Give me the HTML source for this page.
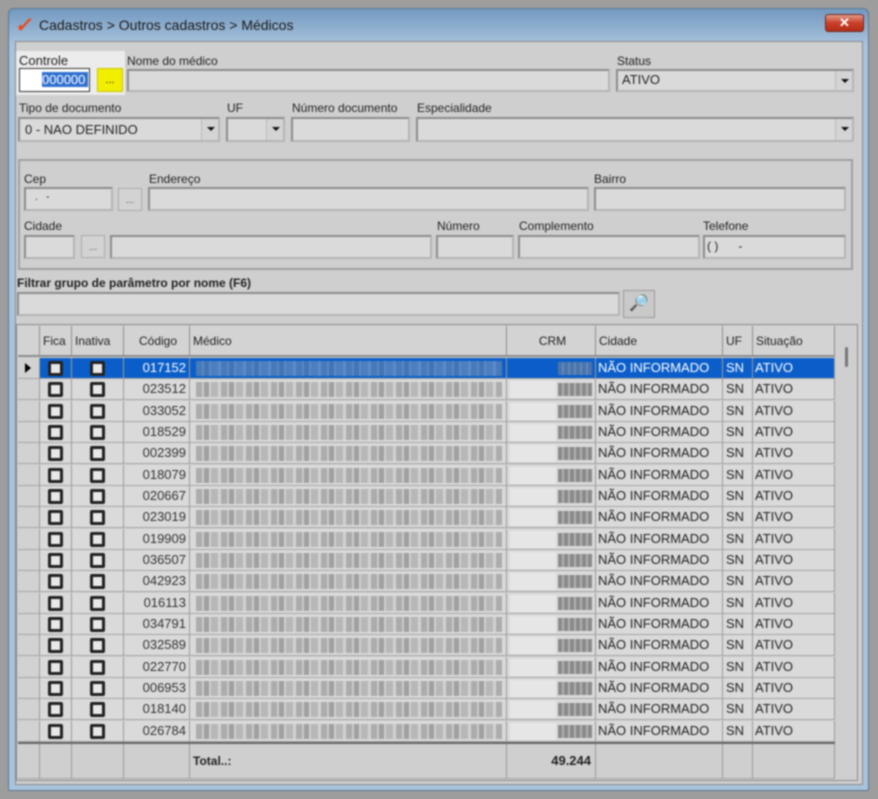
<!DOCTYPE html>
<html><head><meta charset="utf-8">
<style>
*{box-sizing:border-box;margin:0;padding:0}
body{width:878px;height:799px;background:#9d9d9d;font-family:"Liberation Sans",Tahoma,sans-serif;font-size:12px;color:#222;position:relative;overflow:hidden}
#w{position:absolute;left:0;top:0;width:878px;height:799px;filter:blur(0.7px)}
.abs{position:absolute}
.win{left:8px;top:8px;width:861px;height:783px;background:linear-gradient(#7399c0,#a9c3dc 36px,#a9c3dc);border:1px solid #5d7690;border-radius:6px 6px 2px 2px}
.client{left:15px;top:41px;width:848px;height:744px;background:#cfcfcf;border:1px solid #8a8a8a}
.lbl{position:absolute;font-size:12px;color:#222;white-space:nowrap}
.inp{position:absolute;height:22px;background:#dadada;border:2px solid #8c8c8c;border-right-color:#b5b5b5;border-bottom-color:#b5b5b5}
.dd{position:absolute;right:0;top:0;width:17px;height:18px;background:#d4d4d4;border-left:1px solid #bbb}
.dd:after{content:"";position:absolute;left:5px;top:8px;border-left:4px solid transparent;border-right:4px solid transparent;border-top:4px solid #111}
.btn{position:absolute;background:#d3d3d3;border:1px solid #a8a8a8;font-size:10px;text-align:center;line-height:16px;color:#555}
.row{position:absolute;left:18px;height:21px;display:flex;width:817px}
.row>div{height:100%;border-right:1px solid #9a9a9a;border-bottom:1px solid #a5a5a5;background:#dadada;font-size:13px;line-height:20px;white-space:nowrap;overflow:hidden;position:relative}
.c0{width:22px;background:#d2d2d2!important}.c1{width:32px}.c2{width:52px}.c3{width:66px;text-align:right;padding-right:3px;color:#333}.c4{width:317px}.c5{width:89px}.c6{width:127px;padding-left:2px}.c7{width:30px;padding-left:3px}.c8{width:82px;padding-left:2px}
.cb{position:absolute;top:3px;width:15px;height:15px;border:3px solid #222;border-radius:2px;background:#e8e8e8}
.c1 .cb{left:8px}.c2 .cb{left:18px}
.nm{position:absolute;left:6px;top:3px;right:4px;height:15px;background:repeating-linear-gradient(90deg,#a4a4a4 0 6px,#c8c8c8 6px 8px,#969696 8px 13px,#cdcdcd 13px 15px,#b0b0b0 15px 22px,#d0d0d0 22px 25px);opacity:.85}
.crmb{position:absolute;left:3px;top:2px;width:46px;height:17px;background:#e6e6e6}
.crm{position:absolute;right:3px;top:4px;width:34px;height:13px;background:repeating-linear-gradient(90deg,#8a8a8a 0 4px,#b0b0b0 4px 6px)}
.hdr{position:absolute;left:18px;top:326px;height:31px;display:flex;width:817px}
.hdr>div{height:100%;border-right:1px solid #8d8d8d;border-bottom:2px solid #8d8d8d;background:#d3d3d3;line-height:30px;font-size:12px;padding-left:3px;white-space:nowrap}
.sel>div{background:#0b5ec9;color:#fff!important}
.sel .cb{background:#e8e8e8}
</style></head><body><div id="w">
<div class="abs win"></div>
<div class="abs" style="left:16px;top:13px;font-size:21px;color:#e84a1c;font-weight:bold;transform:skewX(-10deg)">✓</div>
<div class="abs" style="left:39px;top:17px;font-size:14px;color:#1a1a1a">Cadastros &gt; Outros cadastros &gt; Médicos</div>
<div class="abs" style="left:825px;top:14px;width:39px;height:18px;background:linear-gradient(#e29a8a,#c9402a 50%,#b32c18);border:1px solid #6d2a20;border-radius:3px;color:#fff;text-align:center;font-size:13px;font-weight:bold;line-height:16px">✕</div>
<div class="abs client"></div>

<div class="abs" style="left:16px;top:51px;width:109px;height:44px;background:#ececec"></div>
<div class="lbl" style="left:19px;top:53px;font-size:13px">Controle</div>
<div class="abs" style="left:19px;top:68px;width:71px;height:24px;background:#fff;border:1px solid #333"></div>
<div class="abs" style="left:42px;top:72px;width:46px;height:15px;background:#3070d0;color:#fff;font-size:13px;line-height:15px;overflow:hidden">000000</div>
<div class="abs" style="left:97px;top:68px;width:26px;height:24px;background:#f2ee00;border:1px solid #c8c400;text-align:center;font-size:11px;line-height:22px">...</div>
<div class="lbl" style="left:127px;top:54px">Nome do médico</div>
<div class="inp" style="left:127px;top:69px;width:483px;height:23px"></div>
<div class="lbl" style="left:617px;top:54px">Status</div>
<div class="inp" style="left:616px;top:69px;width:238px;height:23px;padding-left:4px;line-height:18px;font-size:13px">ATIVO<div class="dd"></div></div>

<div class="lbl" style="left:19px;top:101px">Tipo de documento</div>
<div class="inp" style="left:18px;top:117px;width:202px;height:25px;padding-left:5px;line-height:21px;font-size:13px">0 - NAO DEFINIDO<div class="dd" style="height:21px"></div></div>
<div class="lbl" style="left:227px;top:101px">UF</div>
<div class="inp" style="left:226px;top:117px;width:59px;height:25px"><div class="dd" style="height:21px"></div></div>
<div class="lbl" style="left:292px;top:101px">Número documento</div>
<div class="inp" style="left:291px;top:117px;width:119px;height:25px"></div>
<div class="lbl" style="left:417px;top:101px">Especialidade</div>
<div class="inp" style="left:416px;top:117px;width:438px;height:25px"><div class="dd" style="height:21px"></div></div>

<div class="abs" style="left:18px;top:159px;width:835px;height:111px;border:2px solid #a0a0a0"></div>
<div class="lbl" style="left:24px;top:172px">Cep</div>
<div class="inp" style="left:24px;top:187px;width:89px;height:24px;padding-left:9px;font-size:10px;line-height:18px">.&nbsp;&nbsp; -</div>
<div class="btn" style="left:118px;top:188px;width:24px;height:23px;line-height:24px">...</div>
<div class="lbl" style="left:149px;top:172px">Endereço</div>
<div class="inp" style="left:148px;top:187px;width:441px;height:24px"></div>
<div class="lbl" style="left:594px;top:172px">Bairro</div>
<div class="inp" style="left:594px;top:187px;width:252px;height:24px"></div>
<div class="lbl" style="left:24px;top:219px">Cidade</div>
<div class="inp" style="left:24px;top:235px;width:51px;height:24px"></div>
<div class="btn" style="left:81px;top:235px;width:24px;height:23px;line-height:24px">...</div>
<div class="inp" style="left:110px;top:235px;width:322px;height:24px"></div>
<div class="lbl" style="left:437px;top:219px">Número</div>
<div class="inp" style="left:436px;top:235px;width:78px;height:24px"></div>
<div class="lbl" style="left:519px;top:219px">Complemento</div>
<div class="inp" style="left:518px;top:235px;width:182px;height:24px"></div>
<div class="lbl" style="left:703px;top:219px">Telefone</div>
<div class="inp" style="left:703px;top:235px;width:143px;height:24px;padding-left:2px;line-height:18px;font-size:12px">( )&nbsp;&nbsp;&nbsp;&nbsp;&nbsp; -</div>

<div class="lbl" style="left:17px;top:276px;font-weight:bold">Filtrar grupo de parâmetro por nome (F6)</div>
<div class="inp" style="left:17px;top:292px;width:603px;height:24px"></div>
<div class="abs" style="left:623px;top:290px;width:32px;height:28px;background:#c9c9c9;border:1px solid #999;text-align:center;line-height:26px;font-size:16px;color:#3a8dd0">🔎</div>

<div class="abs" style="left:16px;top:324px;width:842px;height:457px;background:#cfcfcf;border:1px solid #8a8a8a"></div>
<div class="hdr">
<div style="width:22px"></div><div style="width:32px">Fica</div><div style="width:52px">Inativa</div><div style="width:66px;text-align:center">Código</div><div style="width:317px">Médico</div><div style="width:89px;text-align:center">CRM</div><div style="width:127px">Cidade</div><div style="width:30px">UF</div><div style="width:82px">Situação</div>
</div>
<div class="abs" style="left:845px;top:347px;width:3px;height:20px;background:#777;border-radius:2px"></div>

<div class="row sel" style="top:358px"><div class="c0"><span class="abs" style="left:7px;top:5px;border-top:5px solid transparent;border-bottom:5px solid transparent;border-left:6px solid #000"></span></div><div class="c1"><span class="cb"></span></div><div class="c2"><span class="cb"></span></div><div class="c3">017152</div><div class="c4"><span class="nm" style="opacity:.4"></span></div><div class="c5"><span class="crm" style="opacity:.5"></span></div><div class="c6">NÃO INFORMADO</div><div class="c7">SN</div><div class="c8">ATIVO</div></div>
<div class="row" style="top:379px"><div class="c0"></div><div class="c1"><span class="cb"></span></div><div class="c2"><span class="cb"></span></div><div class="c3">023512</div><div class="c4"><span class="nm"></span></div><div class="c5"><span class="crmb"></span><span class="crm"></span></div><div class="c6">NÃO INFORMADO</div><div class="c7">SN</div><div class="c8">ATIVO</div></div>
<div class="row" style="top:401px"><div class="c0"></div><div class="c1"><span class="cb"></span></div><div class="c2"><span class="cb"></span></div><div class="c3">033052</div><div class="c4"><span class="nm"></span></div><div class="c5"><span class="crmb"></span><span class="crm"></span></div><div class="c6">NÃO INFORMADO</div><div class="c7">SN</div><div class="c8">ATIVO</div></div>
<div class="row" style="top:422px"><div class="c0"></div><div class="c1"><span class="cb"></span></div><div class="c2"><span class="cb"></span></div><div class="c3">018529</div><div class="c4"><span class="nm"></span></div><div class="c5"><span class="crmb"></span><span class="crm"></span></div><div class="c6">NÃO INFORMADO</div><div class="c7">SN</div><div class="c8">ATIVO</div></div>
<div class="row" style="top:443px"><div class="c0"></div><div class="c1"><span class="cb"></span></div><div class="c2"><span class="cb"></span></div><div class="c3">002399</div><div class="c4"><span class="nm"></span></div><div class="c5"><span class="crmb"></span><span class="crm"></span></div><div class="c6">NÃO INFORMADO</div><div class="c7">SN</div><div class="c8">ATIVO</div></div>
<div class="row" style="top:465px"><div class="c0"></div><div class="c1"><span class="cb"></span></div><div class="c2"><span class="cb"></span></div><div class="c3">018079</div><div class="c4"><span class="nm"></span></div><div class="c5"><span class="crmb"></span><span class="crm"></span></div><div class="c6">NÃO INFORMADO</div><div class="c7">SN</div><div class="c8">ATIVO</div></div>
<div class="row" style="top:486px"><div class="c0"></div><div class="c1"><span class="cb"></span></div><div class="c2"><span class="cb"></span></div><div class="c3">020667</div><div class="c4"><span class="nm"></span></div><div class="c5"><span class="crmb"></span><span class="crm"></span></div><div class="c6">NÃO INFORMADO</div><div class="c7">SN</div><div class="c8">ATIVO</div></div>
<div class="row" style="top:507px"><div class="c0"></div><div class="c1"><span class="cb"></span></div><div class="c2"><span class="cb"></span></div><div class="c3">023019</div><div class="c4"><span class="nm"></span></div><div class="c5"><span class="crmb"></span><span class="crm"></span></div><div class="c6">NÃO INFORMADO</div><div class="c7">SN</div><div class="c8">ATIVO</div></div>
<div class="row" style="top:529px"><div class="c0"></div><div class="c1"><span class="cb"></span></div><div class="c2"><span class="cb"></span></div><div class="c3">019909</div><div class="c4"><span class="nm"></span></div><div class="c5"><span class="crmb"></span><span class="crm"></span></div><div class="c6">NÃO INFORMADO</div><div class="c7">SN</div><div class="c8">ATIVO</div></div>
<div class="row" style="top:550px"><div class="c0"></div><div class="c1"><span class="cb"></span></div><div class="c2"><span class="cb"></span></div><div class="c3">036507</div><div class="c4"><span class="nm"></span></div><div class="c5"><span class="crmb"></span><span class="crm"></span></div><div class="c6">NÃO INFORMADO</div><div class="c7">SN</div><div class="c8">ATIVO</div></div>
<div class="row" style="top:571px"><div class="c0"></div><div class="c1"><span class="cb"></span></div><div class="c2"><span class="cb"></span></div><div class="c3">042923</div><div class="c4"><span class="nm"></span></div><div class="c5"><span class="crmb"></span><span class="crm"></span></div><div class="c6">NÃO INFORMADO</div><div class="c7">SN</div><div class="c8">ATIVO</div></div>
<div class="row" style="top:593px"><div class="c0"></div><div class="c1"><span class="cb"></span></div><div class="c2"><span class="cb"></span></div><div class="c3">016113</div><div class="c4"><span class="nm"></span></div><div class="c5"><span class="crmb"></span><span class="crm"></span></div><div class="c6">NÃO INFORMADO</div><div class="c7">SN</div><div class="c8">ATIVO</div></div>
<div class="row" style="top:614px"><div class="c0"></div><div class="c1"><span class="cb"></span></div><div class="c2"><span class="cb"></span></div><div class="c3">034791</div><div class="c4"><span class="nm"></span></div><div class="c5"><span class="crmb"></span><span class="crm"></span></div><div class="c6">NÃO INFORMADO</div><div class="c7">SN</div><div class="c8">ATIVO</div></div>
<div class="row" style="top:635px"><div class="c0"></div><div class="c1"><span class="cb"></span></div><div class="c2"><span class="cb"></span></div><div class="c3">032589</div><div class="c4"><span class="nm"></span></div><div class="c5"><span class="crmb"></span><span class="crm"></span></div><div class="c6">NÃO INFORMADO</div><div class="c7">SN</div><div class="c8">ATIVO</div></div>
<div class="row" style="top:657px"><div class="c0"></div><div class="c1"><span class="cb"></span></div><div class="c2"><span class="cb"></span></div><div class="c3">022770</div><div class="c4"><span class="nm"></span></div><div class="c5"><span class="crmb"></span><span class="crm"></span></div><div class="c6">NÃO INFORMADO</div><div class="c7">SN</div><div class="c8">ATIVO</div></div>
<div class="row" style="top:678px"><div class="c0"></div><div class="c1"><span class="cb"></span></div><div class="c2"><span class="cb"></span></div><div class="c3">006953</div><div class="c4"><span class="nm"></span></div><div class="c5"><span class="crmb"></span><span class="crm"></span></div><div class="c6">NÃO INFORMADO</div><div class="c7">SN</div><div class="c8">ATIVO</div></div>
<div class="row" style="top:699px"><div class="c0"></div><div class="c1"><span class="cb"></span></div><div class="c2"><span class="cb"></span></div><div class="c3">018140</div><div class="c4"><span class="nm"></span></div><div class="c5"><span class="crmb"></span><span class="crm"></span></div><div class="c6">NÃO INFORMADO</div><div class="c7">SN</div><div class="c8">ATIVO</div></div>
<div class="row" style="top:721px"><div class="c0"></div><div class="c1"><span class="cb"></span></div><div class="c2"><span class="cb"></span></div><div class="c3">026784</div><div class="c4"><span class="nm"></span></div><div class="c5"><span class="crmb"></span><span class="crm"></span></div><div class="c6">NÃO INFORMADO</div><div class="c7">SN</div><div class="c8">ATIVO</div></div>

<div class="row" style="top:742px;height:37px;border-top:2px solid #666"><div class="c0" style="background:#cfcfcf!important"></div><div class="c1" style="background:#cfcfcf"></div><div class="c2" style="background:#cfcfcf"></div><div class="c3" style="background:#cfcfcf"></div><div class="c4" style="background:#cfcfcf;font-weight:bold;padding-left:3px;line-height:34px;font-size:12px">Total..:</div><div class="c5" style="background:#cfcfcf;font-weight:bold;text-align:right;padding-right:4px;line-height:34px">49.244</div><div class="c6" style="background:#cfcfcf"></div><div class="c7" style="background:#cfcfcf"></div><div class="c8" style="background:#cfcfcf"></div></div>
</div></body></html>
